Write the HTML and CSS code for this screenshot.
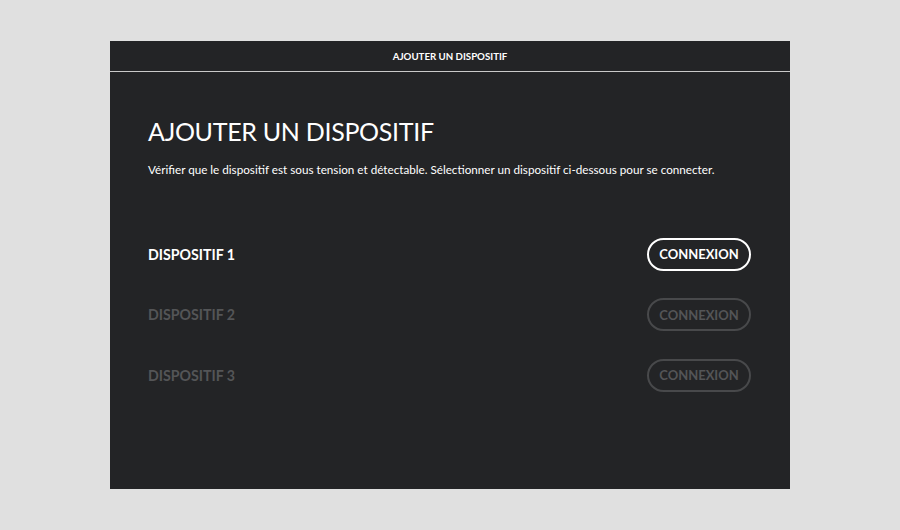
FILE: index.html
```html
<!DOCTYPE html>
<html lang="fr">
<head>
<meta charset="utf-8">
<title>Ajouter un dispositif</title>
<link rel="stylesheet" href="styles.css">
</head>
<body>
<div class="panel">
  <div class="header">AJOUTER UN DISPOSITIF</div>
  <div class="content">
    <h1 class="title">AJOUTER UN DISPOSITIF</h1>
    <p class="subtitle">Vérifier que le dispositif est sous tension et détectable. Sélectionner un dispositif ci-dessous pour se connecter.</p>
    <div class="devices">
      <div class="device">
        <span class="device-name">DISPOSITIF 1</span>
        <button class="connect">CONNEXION</button>
      </div>
      <div class="device disabled">
        <span class="device-name">DISPOSITIF 2</span>
        <button class="connect">CONNEXION</button>
      </div>
      <div class="device disabled">
        <span class="device-name">DISPOSITIF 3</span>
        <button class="connect">CONNEXION</button>
      </div>
    </div>
  </div>
</div>
</body>
</html>
```
FILE: styles.css
```css
html, body {
  margin: 0;
  padding: 0;
  background: #e0e0e0;
  font-family: Lato, "Open Sans", sans-serif;
}
.panel {
  width: 680px;
  height: 448px;
  margin: 41px auto 0;
  background: #232426;
  color: #fff;
  box-sizing: border-box;
}
.header {
  height: 30px;
  border-bottom: 1px solid #c9c9c9;
  display: flex;
  align-items: center;
  justify-content: center;
  font-size: 9.7px;
  font-weight: 700;
  letter-spacing: 0;
}
.content {
  padding: 44px 39px 0 38px;
}
.title {
  margin: 0;
  font-size: 25px;
  font-weight: 400;
  line-height: 30px;
  letter-spacing: -0.3px;
}
.subtitle {
  margin: 15px 0 0;
  font-size: 11.7px;
  line-height: 16px;
}
.devices {
  margin-top: 61px;
  display: flex;
  flex-direction: column;
  gap: 28.5px;
}
.device {
  display: flex;
  align-items: center;
  justify-content: space-between;
  height: 32px;
}
.device-name {
  font-size: 14.2px;
  font-weight: 700;
}
.connect {
  width: 104px;
  height: 33px;
  border: 2px solid #fff;
  border-radius: 17px;
  background: transparent;
  color: #fff;
  font-family: inherit;
  font-size: 13px;
  font-weight: 700;
  padding: 0;
}
.device.disabled .device-name {
  color: #545557;
}
.device.disabled .connect {
  color: #545557;
  border-color: #48494b;
}
```
